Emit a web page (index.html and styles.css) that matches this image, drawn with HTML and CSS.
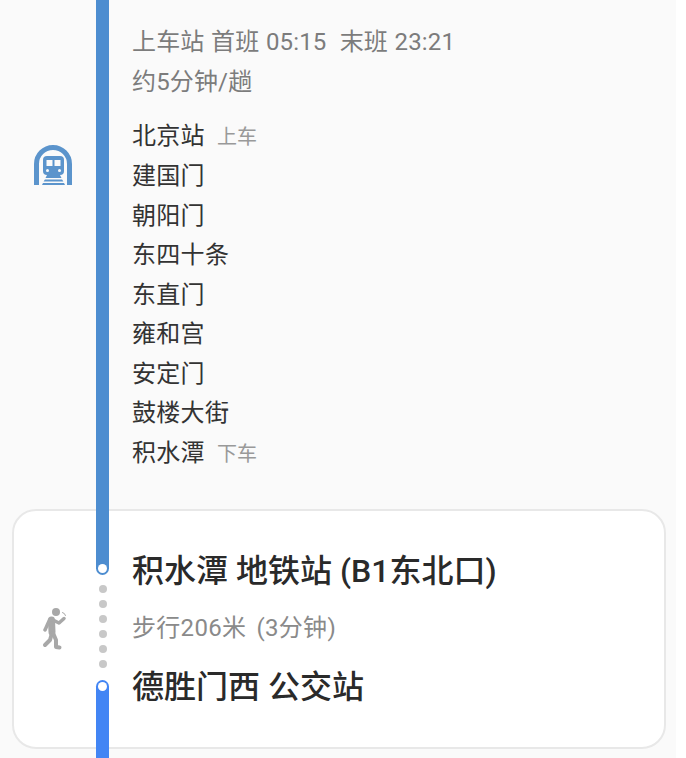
FILE: index.html
```html
<!DOCTYPE html>
<html lang="zh-CN">
<head>
  <meta charset="UTF-8" />
  <meta name="viewport" content="width=device-width, initial-scale=1.0"/>
  <title>乘车路线</title>
  <link rel="stylesheet" href="styles.css">
</head>
<body>
  <div class="screen">
    <section class="ride">
      <div class="ride-icon">
        <svg class="metro-icon" viewBox="0 0 38 40" width="38" height="40">
          <path class="arch" d="M2.5 40V19a16.500 16.500 0 0 1 33 0V40" />
          <rect class="train" x="9" y="11" width="21" height="19" rx="4" />
          <rect class="cut" x="12.500" y="15" width="6" height="6" />
          <rect class="cut" x="20.500" y="15" width="6" height="6" />
          <circle class="cut" cx="13.500" cy="25.500" r="1.500" />
          <circle class="cut" cx="25.500" cy="25.500" r="1.500" />
          <polygon class="train" points="13,30 26,30 31,40 8,40" />
          <rect class="cut" x="8" y="33" width="23" height="1.500" />
          <rect class="cut" x="8" y="36.500" width="23" height="1.500" />
        </svg>
      </div>
      <div class="line line-metro"></div>
      <div class="ride-text">
        <div class="info">上车站 首班 05:15&nbsp; 末班 23:21</div>
        <div class="info">约5分钟/趟</div>
        <ul class="stations">
          <li>北京站<span class="tag">上车</span></li>
          <li>建国门</li>
          <li>朝阳门</li>
          <li>东四十条</li>
          <li>东直门</li>
          <li>雍和宫</li>
          <li>安定门</li>
          <li>鼓楼大街</li>
          <li>积水潭<span class="tag">下车</span></li>
        </ul>
      </div>
    </section>

    <section class="walk-card">
      <div class="walk-icon">
        <svg viewBox="0 0 28 44" width="28" height="44">
          <circle class="person-fill" cx="15" cy="6" r="4" />
          <path class="person thick" d="M10.500 14L11 26" />
          <path class="person arm" d="M8.500 14L4 24" />
          <path class="person arm" d="M12 14L18 17L23 12.500" />
          <path class="person leg" d="M11 27L9 34L4 39" />
          <path class="person leg" d="M12 27L15 34V41L18.500 41.500" />
          <path class="person phone" d="M21.500 6.500A4 4 0 0 1 24.500 9.500" />
        </svg>
      </div>
      <div class="route">
        <div class="line line-metro line-end"><span class="stop"></span></div>
        <div class="dots">
          <span></span><span></span><span></span><span></span><span></span><span></span>
        </div>
        <div class="line line-bus line-start"><span class="stop"></span></div>
      </div>
      <div class="walk-text">
        <div class="place">积水潭 地铁站 (B1东北口)</div>
        <div class="walk-info">步行206米 (3分钟)</div>
        <div class="place place-next">德胜门西 公交站</div>
      </div>
    </section>
  </div>
</body>
</html>
```
FILE: styles.css
```css
body {
  margin: 0;
  background: #fff;
  font-family: Roboto, "Noto Sans CJK SC", sans-serif;
}
.screen {
  width: 676px;
  height: 758px;
  overflow: hidden;
  background: #fafafa;
}
.ride {
  display: flex;
  height: 509px;
}
.ride-icon {
  width: 96px;
  padding-top: 145px;
  padding-left: 10px;
  box-sizing: border-box;
  display: flex;
  justify-content: center;
}
.metro-icon {
  display: block;
}
.arch {
  fill: none;
  stroke: #5b94cc;
  stroke-width: 5;
}
.train {
  fill: #5b94cc;
}
.cut {
  fill: #fafafa;
}
.line {
  width: 13px;
}
.line-metro {
  background: #4d8dd0;
}
.line-bus {
  background: #4285f4;
}
.ride-text {
  margin-left: 23px;
  padding-top: 22px;
}
.info {
  font-size: 24px;
  line-height: 40px;
  color: #7c7c7c;
  letter-spacing: 0.15px;
  word-spacing: 0.5px;
}
.stations {
  list-style: none;
  margin: 14.5px 0 0;
  padding: 0;
}
.stations li {
  font-size: 24px;
  line-height: 39.5px;
  color: #333;
  letter-spacing: 0.3px;
}
.tag {
  margin-left: 12px;
  font-size: 20px;
  color: #999;
  letter-spacing: 0;
}
.walk-card {
  display: flex;
  box-sizing: border-box;
  width: 654px;
  height: 240px;
  margin-left: 12px;
  background: #fff;
  border: 2px solid #e8e8e8;
  border-radius: 24px;
}
.walk-icon {
  width: 82px;
  padding-bottom: 3px;
  box-sizing: border-box;
  display: flex;
  justify-content: center;
  align-items: center;
}
.person {
  fill: none;
  stroke: #a8a8a8;
  stroke-linecap: round;
  stroke-linejoin: round;
}
.person-fill {
  fill: #a8a8a8;
}
.thick {
  stroke-width: 7;
}
.arm {
  stroke-width: 3.5;
}
.leg {
  stroke-width: 4;
}
.phone {
  stroke-width: 1;
}
.route {
  width: 13px;
  display: flex;
  flex-direction: column;
  align-items: center;
  margin: -2px 0 -11px;
}
.route .line {
  position: relative;
}
.line-end {
  height: 66px;
  border-radius: 0 0 7px 7px;
}
.line-start {
  flex: 1;
  border-radius: 7px 7px 0 0;
}
.stop {
  display: block;
  position: absolute;
  left: 2px;
  width: 9px;
  height: 9px;
  border-radius: 50%;
  background: #fff;
}
.line-end .stop {
  bottom: 2px;
}
.line-start .stop {
  top: 2px;
}
.dots {
  display: flex;
  flex-direction: column;
  gap: 7px;
  padding: 10px 0 12px;
}
.dots span {
  display: block;
  width: 8px;
  height: 8px;
  border-radius: 50%;
  background: #c8c8c8;
}
.walk-text {
  margin-left: 23px;
  padding-top: 40px;
}
.place {
  font-size: 32px;
  font-weight: 500;
  line-height: 40px;
  color: #2a2a2a;
}
.walk-info {
  margin-top: 17px;
  font-size: 24px;
  line-height: 40px;
  color: #8a8a8a;
  letter-spacing: 0.3px;
  word-spacing: 4px;
}
.place-next {
  margin-top: 19px;
}
```
